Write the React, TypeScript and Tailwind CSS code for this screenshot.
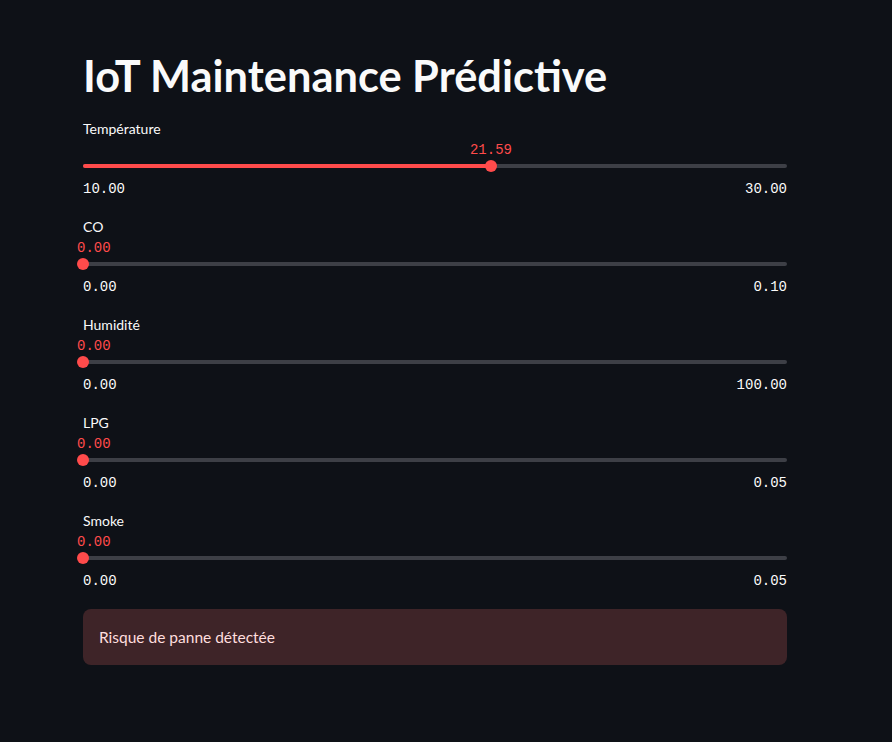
import React from 'react';

interface SliderProps {
  label: string;
  value: number;
  min: number;
  max: number;
}

const sliders: SliderProps[] = [
  { label: 'Température', value: 21.59, min: 10, max: 30 },
  { label: 'CO', value: 0, min: 0, max: 0.1 },
  { label: 'Humidité', value: 0, min: 0, max: 100 },
  { label: 'LPG', value: 0, min: 0, max: 0.05 },
  { label: 'Smoke', value: 0, min: 0, max: 0.05 },
];

const Slider: React.FC<SliderProps> = ({ label, value, min, max }) => {
  const pct = ((value - min) / (max - min)) * 100;
  const atStart = pct <= 0;

  return (
    <div className="flex flex-col">
      <div className="h-5 text-[14px] leading-5 text-[#fafafa]">{label}</div>
      <div className="relative mt-px h-5">
        <span
          className={
            atStart
              ? 'absolute left-[-6px] top-0 font-["Liberation_Mono",monospace] text-[14px] leading-5 text-[#ff4b4b]'
              : 'absolute top-0 -translate-x-1/2 font-["Liberation_Mono",monospace] text-[14px] leading-5 text-[#ff4b4b]'
          }
          style={atStart ? undefined : { left: `${pct}%` }}
        >
          {value.toFixed(2)}
        </span>
      </div>
      <div className="relative mt-1 h-1 rounded-full bg-[#3d3f46]">
        <div className="h-1 rounded-full bg-[#ff4b4b]" style={{ width: `${pct}%` }} />
        <div
          className="absolute top-1/2 h-3 w-3 -translate-x-1/2 -translate-y-1/2 rounded-full bg-[#ff4b4b]"
          style={{ left: `${pct}%` }}
        />
      </div>
      <div className="mt-[11px] flex h-5 justify-between font-['Liberation_Mono',monospace] text-[14px] leading-5 text-[#fafafa]">
        <span>{min.toFixed(2)}</span>
        <span>{max.toFixed(2)}</span>
      </div>
    </div>
  );
};

export default function App() {
  return (
    <div className="min-h-screen bg-[#0e1117] font-['Lato',sans-serif]">
      <div className="ml-[83px] flex w-[704px] flex-col pt-[49px]">
        <h1 className="h-[52px] text-[43.4px] font-bold leading-[52px] text-[#fafafa]">
          IoT Maintenance Prédictive
        </h1>
        <div className="mt-[18px] flex flex-col gap-[18px]">
          {sliders.map((s) => (
            <Slider key={s.label} {...s} />
          ))}
        </div>
        <div className="mt-[18px] rounded-lg bg-[#3e2428] px-4 py-4 text-[15.5px] leading-6 text-[#ffdede]">
          Risque de panne détectée
        </div>
      </div>
    </div>
  );
}
